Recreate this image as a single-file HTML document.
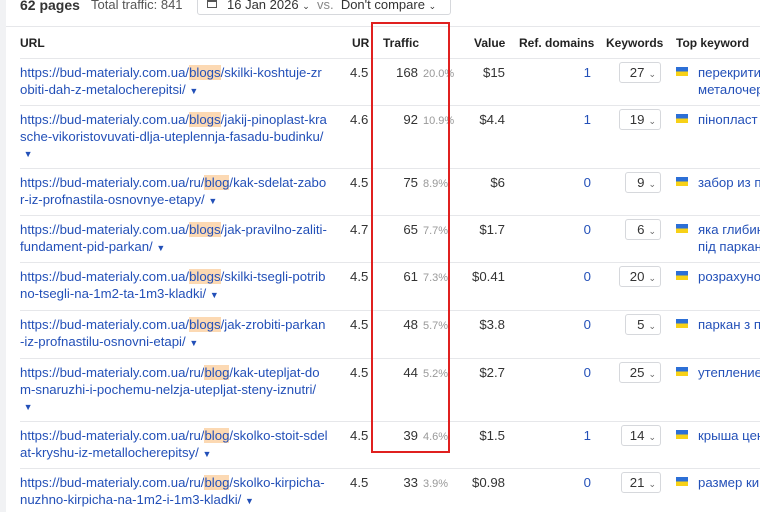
<!DOCTYPE html><html><head><meta charset="utf-8"><style>
*{margin:0;padding:0;box-sizing:border-box}
body{width:760px;height:512px;overflow:hidden;background:#fff;font-family:"Liberation Sans","DejaVu Sans",sans-serif;font-size:13px;color:#333;position:relative}
.strip{position:absolute;left:0;top:0;width:6px;height:512px;background:#f1f2f4}
.a{position:absolute;white-space:nowrap}
.hd{font-weight:bold;font-size:12px;color:#222}
.row{position:absolute;left:0;right:0;font-size:13.2px}
.row:before{content:"";position:absolute;left:20px;right:0;top:0;border-top:1px solid #e6e7ea}
.u{position:absolute;left:20px;top:7px;color:#2350b8;line-height:16.5px;white-space:nowrap}
.u b{font-weight:normal;background:#fcd9b3}
.c{position:absolute;top:7px;line-height:16px;text-align:right}
.pct{color:#999;font-size:11px;top:8px}
.sel{position:absolute;top:4px;height:21px;border:1px solid #d6d8dc;border-radius:3px;background:#fff;line-height:19px;text-align:right;padding-right:4px}
.sel i{font-style:normal;font-size:9px;color:#666;margin-left:4px}
.fl{position:absolute;left:676px;top:9px;width:12px;height:9px;background:linear-gradient(#2c6fd6 50%,#f7d117 50%)}
.k{position:absolute;left:698px;top:7px;line-height:16.5px;color:#2350b8;white-space:nowrap}
.ar{font-size:9px}
</style></head><body>
<div class="strip"></div>
<div class="a" style="left:20px;top:-3px;font-size:14px;font-weight:bold;color:#333">62 pages</div>
<div class="a" style="left:91px;top:-3px;font-size:13px;color:#555">Total traffic: 841</div>
<div class="a" style="left:197px;top:-6px;width:254px;height:21px;border:1px solid #d6d8dc;border-radius:3px"></div>
<div class="a" style="left:207px;top:0px;width:10px;height:8px;border:1px solid #555;border-top:2px solid #555"></div>
<div class="a" style="left:227px;top:-3px;font-size:13px;color:#333">16 Jan 2026 <span style="font-size:9px">⌄</span> <span style="color:#888">&nbsp;vs.</span>&nbsp; Don't compare <span style="font-size:9px">⌄</span></div>
<div class="a" style="left:6px;right:0;top:26px;border-top:1px solid #e6e7ea"></div>
<div class="a hd" style="left:20px;top:36px">URL</div>
<div class="a hd" style="left:352px;top:36px">UR</div>
<div class="a hd" style="left:383px;top:36px">Traffic</div>
<div class="a hd" style="left:474px;top:36px">Value</div>
<div class="a hd" style="left:519px;top:36px">Ref. domains</div>
<div class="a hd" style="left:606px;top:36px">Keywords</div>
<div class="a hd" style="left:676px;top:36px">Top keyword</div>

<div class="row" style="top:58px;height:47px"><div class="u">https://bud-materialy.com.ua/<b>blogs</b>/skilki-koshtuje-zr<br>obiti-dah-z-metalocherepitsi/ <span class="ar">▼</span></div><div class="c" style="left:350px">4.5</div><div class="c" style="right:342px">168</div><div class="c pct" style="left:423px">20.0%</div><div class="c" style="right:255px">$15</div><div class="c" style="right:169px;color:#2350b8">1</div><div class="sel" style="left:619px;width:42px">27<i>⌄</i></div><div class="fl"></div><div class="k">перекрити<br>металочер</div></div>

<div class="row" style="top:105px;height:63px"><div class="u">https://bud-materialy.com.ua/<b>blogs</b>/jakij-pinoplast-kra<br>sche-vikoristovuvati-dlja-uteplennja-fasadu-budinku/<br>&nbsp;<span class="ar">▼</span></div><div class="c" style="left:350px">4.6</div><div class="c" style="right:342px">92</div><div class="c pct" style="left:423px">10.9%</div><div class="c" style="right:255px">$4.4</div><div class="c" style="right:169px;color:#2350b8">1</div><div class="sel" style="left:619px;width:42px">19<i>⌄</i></div><div class="fl"></div><div class="k">пінопласт</div></div>

<div class="row" style="top:168px;height:47px"><div class="u">https://bud-materialy.com.ua/ru/<b>blog</b>/kak-sdelat-zabo<br>r-iz-profnastila-osnovnye-etapy/ <span class="ar">▼</span></div><div class="c" style="left:350px">4.5</div><div class="c" style="right:342px">75</div><div class="c pct" style="left:423px">8.9%</div><div class="c" style="right:255px">$6</div><div class="c" style="right:169px;color:#2350b8">0</div><div class="sel" style="left:625px;width:36px">9<i>⌄</i></div><div class="fl"></div><div class="k">забор из п</div></div>

<div class="row" style="top:215px;height:47px"><div class="u">https://bud-materialy.com.ua/<b>blogs</b>/jak-pravilno-zaliti-<br>fundament-pid-parkan/ <span class="ar">▼</span></div><div class="c" style="left:350px">4.7</div><div class="c" style="right:342px">65</div><div class="c pct" style="left:423px">7.7%</div><div class="c" style="right:255px">$1.7</div><div class="c" style="right:169px;color:#2350b8">0</div><div class="sel" style="left:625px;width:36px">6<i>⌄</i></div><div class="fl"></div><div class="k">яка глибин<br>під паркан</div></div>

<div class="row" style="top:262px;height:48px"><div class="u">https://bud-materialy.com.ua/<b>blogs</b>/skilki-tsegli-potrib<br>no-tsegli-na-1m2-ta-1m3-kladki/ <span class="ar">▼</span></div><div class="c" style="left:350px">4.5</div><div class="c" style="right:342px">61</div><div class="c pct" style="left:423px">7.3%</div><div class="c" style="right:255px">$0.41</div><div class="c" style="right:169px;color:#2350b8">0</div><div class="sel" style="left:619px;width:42px">20<i>⌄</i></div><div class="fl"></div><div class="k">розрахуно</div></div>

<div class="row" style="top:310px;height:48px"><div class="u">https://bud-materialy.com.ua/<b>blogs</b>/jak-zrobiti-parkan<br>-iz-profnastilu-osnovni-etapi/ <span class="ar">▼</span></div><div class="c" style="left:350px">4.5</div><div class="c" style="right:342px">48</div><div class="c pct" style="left:423px">5.7%</div><div class="c" style="right:255px">$3.8</div><div class="c" style="right:169px;color:#2350b8">0</div><div class="sel" style="left:625px;width:36px">5<i>⌄</i></div><div class="fl"></div><div class="k">паркан з п</div></div>

<div class="row" style="top:358px;height:63px"><div class="u">https://bud-materialy.com.ua/ru/<b>blog</b>/kak-utepljat-do<br>m-snaruzhi-i-pochemu-nelzja-utepljat-steny-iznutri/<br>&nbsp;<span class="ar">▼</span></div><div class="c" style="left:350px">4.5</div><div class="c" style="right:342px">44</div><div class="c pct" style="left:423px">5.2%</div><div class="c" style="right:255px">$2.7</div><div class="c" style="right:169px;color:#2350b8">0</div><div class="sel" style="left:619px;width:42px">25<i>⌄</i></div><div class="fl"></div><div class="k">утепление</div></div>

<div class="row" style="top:421px;height:47px"><div class="u">https://bud-materialy.com.ua/ru/<b>blog</b>/skolko-stoit-sdel<br>at-kryshu-iz-metallocherepitsy/ <span class="ar">▼</span></div><div class="c" style="left:350px">4.5</div><div class="c" style="right:342px">39</div><div class="c pct" style="left:423px">4.6%</div><div class="c" style="right:255px">$1.5</div><div class="c" style="right:169px;color:#2350b8">1</div><div class="sel" style="left:621px;width:40px">14<i>⌄</i></div><div class="fl"></div><div class="k">крыша цен</div></div>

<div class="row" style="top:468px;height:47px"><div class="u">https://bud-materialy.com.ua/ru/<b>blog</b>/skolko-kirpicha-<br>nuzhno-kirpicha-na-1m2-i-1m3-kladki/ <span class="ar">▼</span></div><div class="c" style="left:350px">4.5</div><div class="c" style="right:342px">33</div><div class="c pct" style="left:423px">3.9%</div><div class="c" style="right:255px">$0.98</div><div class="c" style="right:169px;color:#2350b8">0</div><div class="sel" style="left:621px;width:40px">21<i>⌄</i></div><div class="fl"></div><div class="k">размер ки</div></div>

<div class="a" style="left:371px;top:22px;width:79px;height:431px;border:2px solid #e0201f"></div>
</body></html>
